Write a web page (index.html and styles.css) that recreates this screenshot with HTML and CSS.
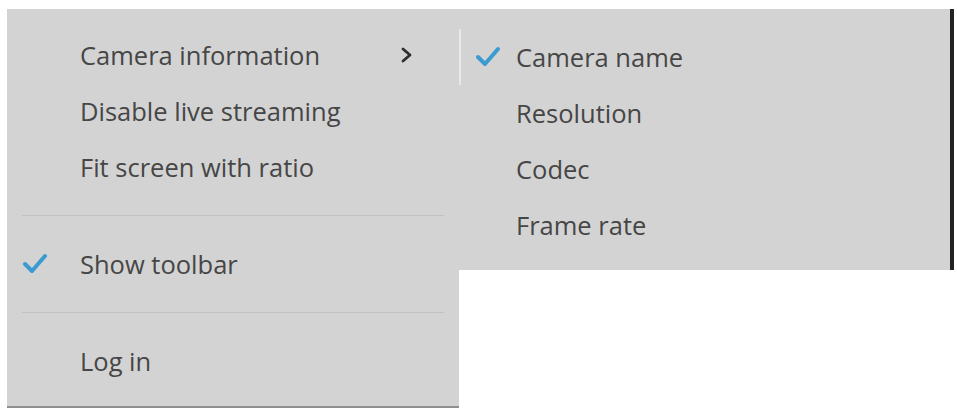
FILE: index.html
```html
<!DOCTYPE html>
<html lang="en">
<head>
<meta charset="UTF-8">
<meta name="viewport" content="width=device-width, initial-scale=1.0">
<title>Context menu</title>
<link rel="stylesheet" href="styles.css">
</head>
<body>

<div class="menus">
<div class="menu">
<div class="item">
<span class="mark"></span>
<span class="label">Camera information</span>
<svg class="arrow" width="12" height="16" viewBox="0 0 12 16"><polyline points="2,2 9,8 2,14" fill="none" stroke="#2e2e2e" stroke-width="2.8" stroke-linecap="round" stroke-linejoin="round"/></svg>
</div>
<div class="item">
<span class="mark"></span>
<span class="label">Disable live streaming</span>
</div>
<div class="item">
<span class="mark"></span>
<span class="label">Fit screen with ratio</span>
</div>
<div class="sep"></div>
<div class="item">
<span class="mark">
<svg width="26" height="22" viewBox="0 0 26 22"><polyline points="3,11 10,18 23,3" fill="none" stroke="#3a9bd0" stroke-width="4" stroke-linecap="round" stroke-linejoin="round"/></svg>
</span>
<span class="label">Show toolbar</span>
</div>
<div class="sep"></div>
<div class="item">
<span class="mark"></span>
<span class="label">Log in</span>
</div>
<div class="menu-foot"></div>
</div>

<div class="submenu">
<div class="item active">
<span class="mark">
<svg width="26" height="22" viewBox="0 0 26 22"><polyline points="3,11 10,18 23,3" fill="none" stroke="#3a9bd0" stroke-width="4" stroke-linecap="round" stroke-linejoin="round"/></svg>
</span>
<span class="label">Camera name</span>
</div>
<div class="item">
<span class="mark"></span>
<span class="label">Resolution</span>
</div>
<div class="item">
<span class="mark"></span>
<span class="label">Codec</span>
</div>
<div class="item">
<span class="mark"></span>
<span class="label">Frame rate</span>
</div>
</div>
</div>

</body>
</html>
```

FILE: styles.css
```css
body {
margin: 0;
background-color: #ffffff;
font-family: "Open Sans", "Noto Sans", sans-serif;
color: #464646;
}

.menus {
display: flex;
align-items: flex-start;
padding: 9px 0 0 7px;
}

.menu {
width: 452px;
padding-top: 18px;
background-color: #d3d3d3;
}

.menu-foot {
height: 17px;
border-bottom: 2px solid #8e8e8e;
}

.submenu {
width: 491px;
padding: 20px 0 17px 0;
background-color: #d3d3d3;
border-right: 4px solid #222222;
}

.item {
display: flex;
align-items: center;
height: 56px;
font-size: 25.5px;
font-weight: 500;
}

.menu .item {
padding-left: 15px;
}

.menu .mark {
width: 58px;
}

.submenu .item {
padding-left: 16px;
}

.submenu .mark {
width: 41px;
}

.submenu .active {
box-shadow: inset 2px 0 0 #e9e9e9;
}

.mark {
display: flex;
align-items: center;
flex-shrink: 0;
}

.arrow {
margin-left: auto;
margin-right: 46px;
}

.sep {
height: 1px;
margin: 20px 15px;
background-color: #c2c2c2;
}
```
